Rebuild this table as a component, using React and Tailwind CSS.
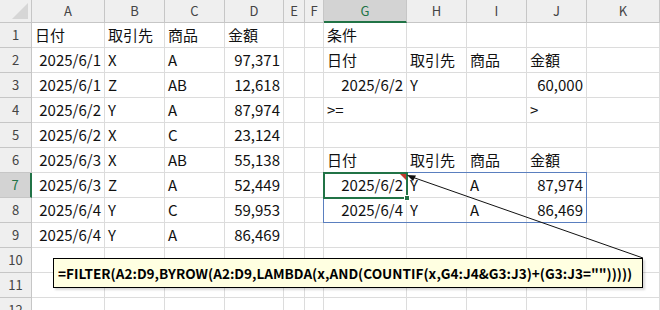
import React from 'react';

const cols = ['A', 'B', 'C', 'D', 'E', 'F', 'G', 'H', 'I', 'J', 'K'];

// each row: 11 cells, value or [value, 'r'] for right aligned
const rows = [
  ['日付', '取引先', '商品', '金額', '', '', '条件', '', '', '', ''],
  [['2025/6/1', 'r'], 'X', 'A', ['97,371', 'r'], '', '', '日付', '取引先', '商品', '金額', ''],
  [['2025/6/1', 'r'], 'Z', 'AB', ['12,618', 'r'], '', '', ['2025/6/2', 'r'], 'Y', '', ['60,000', 'r'], ''],
  [['2025/6/2', 'r'], 'Y', 'A', ['87,974', 'r'], '', '', '>=', '', '', '>', ''],
  [['2025/6/2', 'r'], 'X', 'C', ['23,124', 'r'], '', '', '', '', '', '', ''],
  [['2025/6/3', 'r'], 'X', 'AB', ['55,138', 'r'], '', '', '日付', '取引先', '商品', '金額', ''],
  [['2025/6/3', 'r'], 'Z', 'A', ['52,449', 'r'], '', '', ['2025/6/2', 'r'], 'Y', 'A', ['87,974', 'r'], ''],
  [['2025/6/4', 'r'], 'Y', 'C', ['59,953', 'r'], '', '', ['2025/6/4', 'r'], 'Y', 'A', ['86,469', 'r'], ''],
  [['2025/6/4', 'r'], 'Y', 'A', ['86,469', 'r'], '', '', '', '', '', '', ''],
  ['', '', '', '', '', '', '', '', '', '', ''],
  ['', '', '', '', '', '', '', '', '', '', ''],
  ['', '', '', '', '', '', '', '', '', '', ''],
];

function Cell({ v }) {
  const right = Array.isArray(v);
  const text = right ? v[0] : v;
  return (
    <div
      className={`border-r border-b border-[#dcdcdc] bg-white flex items-center overflow-visible whitespace-nowrap px-[3px] text-[15px] text-[#111] ${
        right ? 'justify-end' : 'justify-start'
      }`}
    >
      {text}
    </div>
  );
}

export default function App() {
  return (
    <div
      className="relative w-[660px] h-[310px] overflow-hidden bg-white"
      style={{ fontFamily: '"Noto Sans CJK JP", "Noto Sans", sans-serif' }}
    >
      <div className="grid grid-cols-[32px_73px_60px_60px_59px_21px_19px_83px_60px_60px_60px_73px] grid-rows-[23px_repeat(12,25px)]">
        {/* corner */}
        <div className="relative bg-[#efefef] border-r border-b border-[#c6c6c6]">
          <div className="absolute right-[3px] bottom-[3px] w-0 h-0 border-l-[16px] border-l-transparent border-b-[16px] border-b-[#d6d6d6]" />
        </div>
        {cols.map((c) =>
          c === 'G' ? (
            <div
              key={c}
              className="bg-[#d3d3d3] border-r border-[#c6c6c6] border-b-2 border-b-[#217346] flex items-center justify-center text-[13px] text-[#217346]"
            >
              {c}
            </div>
          ) : (
            <div
              key={c}
              className="bg-[#efefef] border-r border-b border-[#c6c6c6] flex items-center justify-center text-[13px] text-[#444]"
            >
              {c}
            </div>
          )
        )}
        {rows.map((r, i) => (
          <React.Fragment key={i}>
            {i === 6 ? (
              <div className="bg-[#d3d3d3] border-b border-[#c6c6c6] border-r-2 border-r-[#217346] flex items-center justify-center text-[13px] text-[#217346]">
                {i + 1}
              </div>
            ) : (
              <div className="bg-[#efefef] border-r border-b border-[#c6c6c6] flex items-center justify-center text-[13px] text-[#444]">
                {i + 1}
              </div>
            )}
            {r.map((v, j) => (
              <Cell key={j} v={v} />
            ))}
          </React.Fragment>
        ))}
      </div>

      {/* spill range border G7:J8 */}
      <div className="absolute left-[323px] top-[172px] w-[264px] h-[51px] border border-[#5a7fbf] pointer-events-none" />
      {/* active cell G7 */}
      <div className="absolute left-[323px] top-[172px] w-[85px] h-[27px] border-2 border-[#217346] pointer-events-none" />
      <div className="absolute left-[404px] top-[195px] w-[6px] h-[6px] bg-[#217346] border border-white" />
      {/* comment marker */}
      <div className="absolute left-[400px] top-[174px] w-0 h-0 border-l-[6px] border-l-transparent border-t-[6px] border-t-[#c0392b]" />

      {/* callout arrow */}
      <svg className="absolute left-0 top-0 pointer-events-none" width="660" height="310">
        <line x1="643" y1="258" x2="412" y2="177" stroke="#111" strokeWidth="1" />
        <polygon points="407,175 416,175.5 413,181" fill="#111" />
      </svg>

      {/* formula callout */}
      <div className="absolute left-[53px] top-[258px] w-[590px] h-[30px] bg-[#ffffe1] border-[1.5px] border-black shadow-[2px_2px_2px_rgba(0,0,0,0.15)] flex items-center px-[4px]">
        <span className="text-[13.6px] font-bold text-black whitespace-nowrap">
          =FILTER(A2:D9,BYROW(A2:D9,LAMBDA(x,AND(COUNTIF(x,G4:J4&amp;G3:J3)+(G3:J3=&quot;&quot;)))))
        </span>
      </div>
    </div>
  );
}
